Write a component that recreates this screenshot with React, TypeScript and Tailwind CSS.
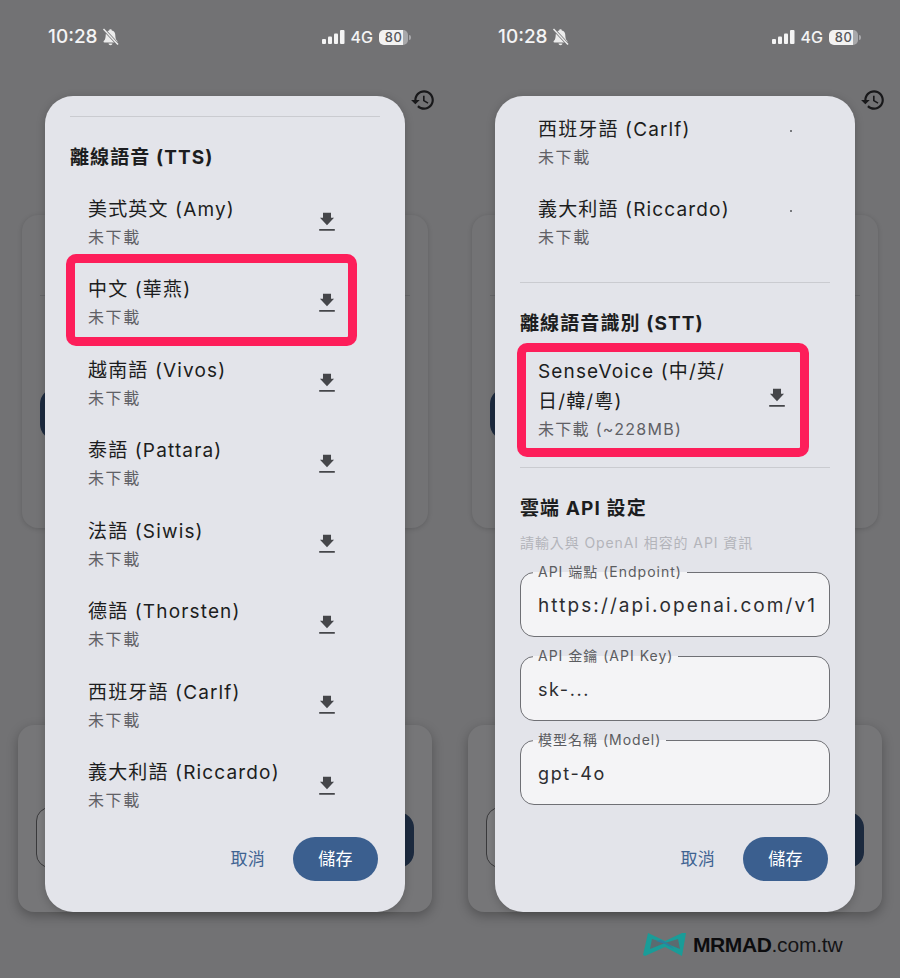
import React from "react";

const ttsVoices = [
  "美式英文 (Amy)",
  "中文 (華燕)",
  "越南語 (Vivos)",
  "泰語 (Pattara)",
  "法語 (Siwis)",
  "德語 (Thorsten)",
  "西班牙語 (Carlf)",
  "義大利語 (Riccardo)",
];

const apiFields = [
  { label: "API 端點 (Endpoint)", value: "https://api.openai.com/v1", valueClass: "text-[19px] tracking-[2.1px]" },
  { label: "API 金鑰 (API Key)", value: "sk-...", valueClass: "text-[18px] tracking-[1.6px]" },
  { label: "模型名稱 (Model)", value: "gpt-4o", valueClass: "text-[18px] tracking-[1.6px]" },
];

function DownloadIcon() {
  return (
    <svg width="26" height="26" viewBox="0 0 24 24" fill="#45464a">
      <path d="M15.700 8V3.500H8.300V8H5.500l6.500 7 6.500-7h-2.800zM4.800 18.400v1.600h14.400v-1.600H4.800z" />
    </svg>
  );
}

function HistoryIcon() {
  return (
    <svg width="26" height="26" viewBox="0 0 24 24" fill="#18181a">
      <path d="M13 3c-4.970 0-9 4.030-9 9H1l3.890 3.890.07.140L9 12H6c0-3.870 3.130-7 7-7s7 3.130 7 7-3.130 7-7 7c-1.930 0-3.680-.79-4.940-2.060l-1.420 1.420C8.270 19.990 10.510 21 13 21c4.970 0 9-4.030 9-9s-4.030-9-9-9zm-1 5v5l4.280 2.540.72-1.210-3.500-2.080V8H12z" />
    </svg>
  );
}

function StatusBar() {
  return (
    <div className="flex h-[72px] items-start justify-between pl-[48px] pr-[39px] pt-[26px] text-[#f4f4f4]">
      <div className="flex items-center gap-[4px]">
        <span className="text-[19px] leading-[22px] font-medium">10:28</span>
        <svg width="17" height="18" viewBox="0 0 17 18" fill="#ececec">
          <path d="M8.500 1.200c-.8 0-1.300.5-1.300 1.200C5 2.900 3.700 4.600 3.700 7c0 1.200-.2 3.200-.9 4.700-.5.900-1.300 1.300-1.300 2.100 0 .5.400.8 1 .8h12c.6 0 1-.3 1-.8 0-.8-.8-1.200-1.300-2.100-.7-1.500-.9-3.500-.9-4.700 0-2.400-1.300-4.100-3.500-4.600 0-.7-.5-1.200-1.300-1.200zM6.500 15.500c.2 1 1 1.700 2 1.700s1.800-.7 2-1.700H6.500z" />
          <path d="M1.500 1 16 16.500" stroke="#727274" strokeWidth="2.800" />
          <path d="M1.500 1 16 16.500" stroke="#ececec" strokeWidth="1.500" />
        </svg>
      </div>
      <div className="flex items-center">
        <svg width="23" height="14" viewBox="0 0 23 14" fill="#f4f4f4">
          <rect x="0" y="9" width="4" height="5" rx="1" />
          <rect x="6" y="6.500" width="4" height="7.500" rx="1" />
          <rect x="12" y="3.500" width="4" height="10.500" rx="1" />
          <rect x="18" y="0" width="4.500" height="14" rx="1" />
        </svg>
        <span className="ml-[6px] text-[16px] leading-[22px] font-medium">4G</span>
        <div className="ml-[6px] flex h-[15px] w-[29px] items-center justify-center rounded-[5px] bg-[linear-gradient(90deg,#f2f2f2_82%,#a8a8aa_82%)] text-[13px] leading-none font-medium tracking-[0.5px] text-[#58585a]">
          80
        </div>
        <div className="ml-[1px] h-[5px] w-[2px] rounded-r-[2px] bg-[#a8a8aa]" />
      </div>
    </div>
  );
}

// the dimmed settings page behind the dialog
function PageBehind() {
  return (
    <>
      <div className="flex justify-end pr-[14px] pt-[15px]">
        <HistoryIcon />
      </div>
      <div className="mx-[22px] mt-[102px] h-[313px] rounded-[16px] bg-[#737375] pt-[80px] shadow-[0_1px_5px_rgba(0,0,0,0.16)]">
        <div className="mx-[18px] h-px bg-[#67676a]" />
        <div className="ml-[18px] mt-[92px] h-[52px] w-[300px] rounded-[16px] bg-[#1d2b40]" />
      </div>
      <div className="mx-[18px] mt-[197px] flex h-[187px] items-end gap-[12px] rounded-[16px] bg-[#767678] px-[18px] pb-[44px] shadow-[0_4px_12px_rgba(0,0,0,0.28)]">
        <div className="h-[61px] flex-1 rounded-[14px] border border-[#3a3a3c] bg-[#7e7e80]" />
        <div className="h-[56px] w-[120px] rounded-[16px] bg-[#1d2b40]" />
      </div>
    </>
  );
}

function VoiceRow({ name }: { name: string }) {
  return (
    <div className="flex h-[80.5px] items-center justify-between pl-[18px] pr-[40px]">
      <div>
        <div className="text-[19px] leading-[30px] tracking-[1.15px] text-[#1c1d20]">{name}</div>
        <div className="-mt-[1px] text-[16px] leading-[26px] tracking-[1.6px] text-[#5f6065]">未下載</div>
      </div>
      <DownloadIcon />
    </div>
  );
}

function DialogActions() {
  return (
    <div className="flex items-center justify-end gap-[28px] pr-[27px]">
      <span className="pt-[2px] text-[17px] tracking-[0.3px] text-[#3f6392]">取消</span>
      <div className="flex h-[44px] w-[85px] items-center justify-center rounded-full bg-[#3b5f8f] pt-[2px] text-[17px] tracking-[0.3px] text-white">
        儲存
      </div>
    </div>
  );
}

function Highlight({ className }: { className: string }) {
  return <div className={`absolute rounded-[10px] border-[9px] border-[#fd1e5a] ${className}`} />;
}

function OutlinedField({ label, value, valueClass }: { label: string; value: string; valueClass: string }) {
  return (
    <div className={`relative h-[65px] rounded-[14px] border border-[#6f7075] bg-[#f4f4f6] pl-[17px] pt-[20px] leading-[26px] text-[#2c2d30] ${valueClass}`}>
      {value}
      <span className="absolute left-[12px] top-[-11px] bg-[linear-gradient(180deg,#e3e4ea_50%,#f4f4f6_50%)] px-[5px] text-[14px] leading-[20px] tracking-[1px] text-[#5b5c60]">
        {label}
      </span>
    </div>
  );
}

function Phone({ children }: { children: React.ReactNode }) {
  return (
    <div className="relative h-[978px] w-[450px] overflow-hidden bg-[#727274]">
      <StatusBar />
      <PageBehind />
      <div className="absolute left-[45px] top-[96px] flex h-[816px] w-[360px] flex-col overflow-hidden rounded-[28px] bg-[#e3e4ea] shadow-[0_2px_10px_rgba(0,0,0,0.2)]">
        <div className="h-[719px] overflow-hidden px-[25px]">{children}</div>
        <div className="mt-[22px]">
          <DialogActions />
        </div>
      </div>
    </div>
  );
}

export default function App() {
  return (
    <div className="flex h-[978px] w-[900px] font-[Inter,'Noto_Sans_CJK_TC',sans-serif]">
      <Phone>
        <div className="mt-[20px] h-px bg-[#cacbd0]" />
        <h2 className="mt-[29px] text-[19px] leading-[24px] font-bold tracking-[1.1px] text-[#1c1d20]">離線語音 (TTS)</h2>
        <div className="mt-[12px]">
          {ttsVoices.map((name) => (
            <VoiceRow key={name} name={name} />
          ))}
        </div>
      </Phone>
      <div className="relative">
        <Phone>
          <div className="mt-[6px]">
            {ttsVoices.slice(6).map((name) => (
              <div key={name} className="flex h-[80.5px] items-center justify-between pl-[18px] pr-[38px]">
                <div>
                  <div className="text-[19px] leading-[30px] tracking-[1.15px] text-[#1c1d20]">{name}</div>
                  <div className="-mt-[1px] text-[16px] leading-[26px] tracking-[1.6px] text-[#5f6065]">未下載</div>
                </div>
                <div className="mb-[23px] size-[2px] rounded-full bg-[#55565a]" />
              </div>
            ))}
          </div>
          <div className="mt-[19px] h-px bg-[#cacbd0]" />
          <h2 className="mt-[29px] text-[19px] leading-[24px] font-bold tracking-[1.1px] text-[#1c1d20]">離線語音識別 (STT)</h2>
          <div className="mt-[12px] flex items-center justify-between pb-[12px] pl-[18px] pr-[40px] pt-[9px]">
            <div className="w-[200px]">
              <div className="text-[19px] leading-[30px] tracking-[1.15px] text-[#1c1d20]">SenseVoice (中/英/日/韓/粵)</div>
              <div className="-mt-[1px] text-[16px] leading-[26px] tracking-[1.3px] text-[#5f6065]">未下載 (~228MB)</div>
            </div>
            <div className="mb-[4px]">
              <DownloadIcon />
            </div>
          </div>
          <div className="mt-[13px] h-px bg-[#cacbd0]" />
          <h2 className="mt-[29px] text-[19px] leading-[24px] font-bold tracking-[1.1px] text-[#1c1d20]">雲端 API 設定</h2>
          <p className="mt-[12px] text-[14px] leading-[20px] tracking-[0.9px] text-[#b3b4ba]">請輸入與 OpenAI 相容的 API 資訊</p>
          <div className="mt-[19px] flex flex-col gap-[19px]">
            {apiFields.map((f) => (
              <OutlinedField key={f.label} label={f.label} value={f.value} valueClass={f.valueClass} />
            ))}
          </div>
        </Phone>
        <Highlight className="left-[67px] top-[343px] h-[114px] w-[292px]" />
        <div className="absolute left-[193px] top-[932px] flex items-center gap-[6px]">
          <svg width="44" height="25" viewBox="0 0 44 25">
            <path d="M5 1 22 9 39 1 43 1 39 24 22 15 2 24 0 23z" fill="#1a9c98" />
            <path d="M9 7 7 17 22 11zM35 7 37 17 22 11z" fill="#5b6b70" />
            <path d="M13 9 22 12 31 17 26 12 18 8z" fill="#2b7ea0" />
          </svg>
          <span className="font-['Liberation_Sans',sans-serif] text-[21px] leading-[24px] tracking-[-0.2px] text-[#141416]">
            <span className="font-bold tracking-[-0.4px] text-[#0c0c0e]">MRMAD</span>.com.tw
          </span>
        </div>
      </div>
      <Highlight className="left-[66px] top-[254px] h-[92px] w-[291px]" />
    </div>
  );
}
